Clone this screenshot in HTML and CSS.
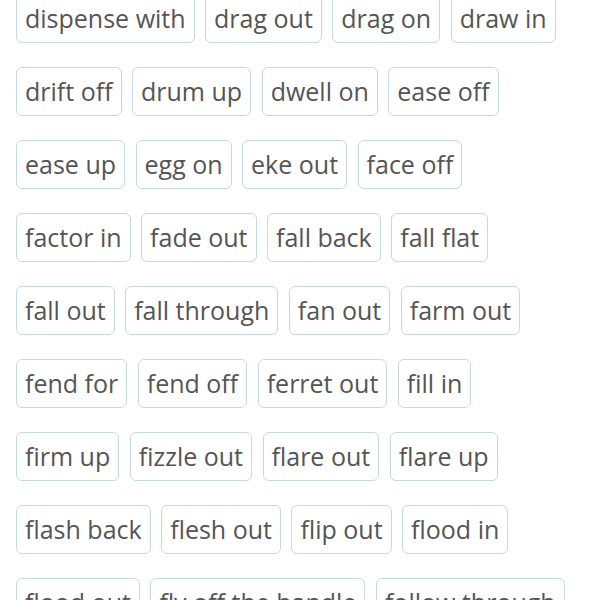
FILE: index.html
```html
<!DOCTYPE html>
<html>
<head>
<meta charset="utf-8">
<link rel="stylesheet" href="styles.css">
</head>
<body>
<div class="tags">
<div class="row"><span class="tag">dispense with</span><span class="tag">drag out</span><span class="tag">drag on</span><span class="tag">draw in</span></div>
<div class="row"><span class="tag">drift off</span><span class="tag">drum up</span><span class="tag">dwell on</span><span class="tag">ease off</span></div>
<div class="row"><span class="tag">ease up</span><span class="tag">egg on</span><span class="tag">eke out</span><span class="tag">face off</span></div>
<div class="row"><span class="tag">factor in</span><span class="tag">fade out</span><span class="tag">fall back</span><span class="tag">fall flat</span></div>
<div class="row"><span class="tag">fall out</span><span class="tag">fall through</span><span class="tag">fan out</span><span class="tag">farm out</span></div>
<div class="row"><span class="tag">fend for</span><span class="tag">fend off</span><span class="tag">ferret out</span><span class="tag">fill in</span></div>
<div class="row"><span class="tag">firm up</span><span class="tag">fizzle out</span><span class="tag">flare out</span><span class="tag">flare up</span></div>
<div class="row"><span class="tag">flash back</span><span class="tag">flesh out</span><span class="tag">flip out</span><span class="tag">flood in</span></div>
<div class="row"><span class="tag">flood out</span><span class="tag">fly off the handle</span><span class="tag">follow through</span></div>
</div>
</body>
</html>
```
FILE: styles.css
```css
html, body {
  margin: 0;
  padding: 0;
  background: #ffffff;
  overflow: hidden;
}
.tags {
  display: flex;
  flex-direction: column;
  gap: 24px;
  padding: 0 16px;
  margin-top: -6px;
  font-family: "Open Sans", sans-serif;
  font-size: 25px;
  color: #555555;
}
.row {
  display: flex;
  gap: 10.5px;
}
.tag {
  display: inline-block;
  box-sizing: border-box;
  height: 49px;
  line-height: 47px;
  padding: 0 8px;
  border: 1px solid #c5d9e0;
  border-radius: 6px;
  white-space: nowrap;
}
```
